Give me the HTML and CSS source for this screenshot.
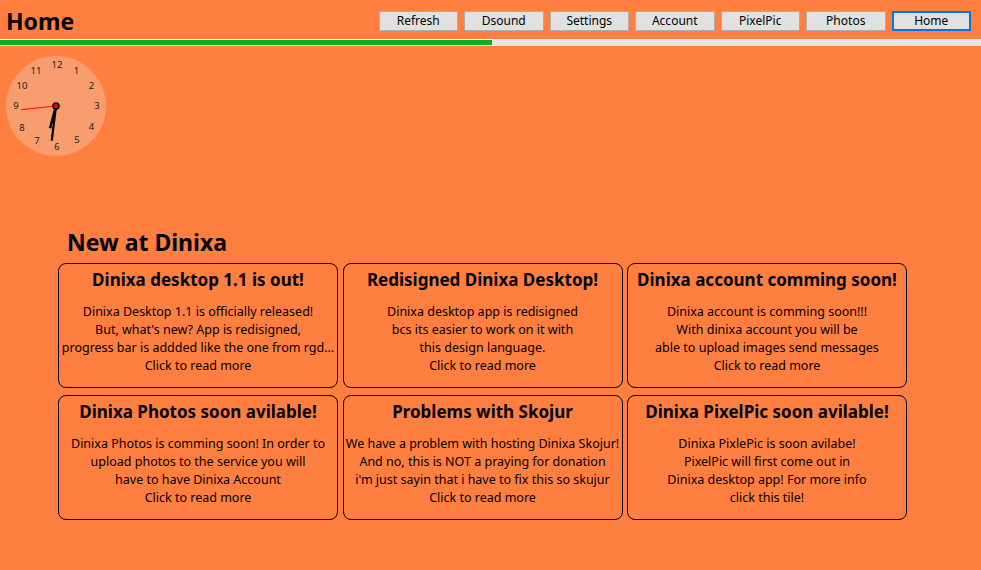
FILE: index.html
```html
<!DOCTYPE html>
<html>
<head>
<meta charset="utf-8">
<link rel="stylesheet" href="styles.css">
</head>
<body>
<header class="topbar">
  <h1 class="page-title">Home</h1>
  <nav class="nav">
    <button class="nav-btn">Refresh</button>
    <button class="nav-btn">Dsound</button>
    <button class="nav-btn">Settings</button>
    <button class="nav-btn">Account</button>
    <button class="nav-btn">PixelPic</button>
    <button class="nav-btn">Photos</button>
    <button class="nav-btn nav-btn-active">Home</button>
  </nav>
</header>
<div class="progress"><div class="progress-fill" style="width:50.2%"></div></div>

<div class="clock-wrap">
  <svg class="clock" width="102" height="102" viewBox="0 0 102 102">
    <circle cx="51" cy="51" r="50" class="face"/>
    <g class="nums">
      <text x="52" y="13">12</text>
      <text x="71.5" y="18.5">1</text>
      <text x="86.5" y="33.5">2</text>
      <text x="92" y="54">3</text>
      <text x="86.5" y="75">4</text>
      <text x="72" y="88">5</text>
      <text x="52" y="95">6</text>
      <text x="32" y="89">7</text>
      <text x="17" y="76">8</text>
      <text x="11" y="54">9</text>
      <text x="17" y="33.5">10</text>
      <text x="31" y="19">11</text>
    </g>
    <line x1="51" y1="51" x2="51" y2="28" class="hand-hour" transform="rotate(195 51 51)"/>
    <line x1="51" y1="51" x2="51" y2="16" class="hand-min" transform="rotate(187 51 51)"/>
    <line x1="51" y1="51" x2="51" y2="16" class="hand-sec" transform="rotate(264 51 51)"/>
    <circle cx="51" cy="51" r="3" class="hub"/>
  </svg>
</div>

<section class="news">
  <h2 class="news-title">New at Dinixa</h2>
  <div class="cards">
    <div class="card">
      <h3 class="card-title">Dinixa desktop 1.1 is out!</h3>
      <p class="card-text">Dinixa Desktop 1.1 is officially released!<br>But, what's new? App is redisigned,<br>progress bar is addded like the one from rgd...<br>Click to read more</p>
    </div>
    <div class="card">
      <h3 class="card-title">Redisigned Dinixa Desktop!</h3>
      <p class="card-text">Dinixa desktop app is redisigned<br>bcs its easier to work on it with<br>this design language.<br>Click to read more</p>
    </div>
    <div class="card">
      <h3 class="card-title">Dinixa account comming soon!</h3>
      <p class="card-text">Dinixa account is comming soon!!!<br>With dinixa account you will be<br>able to upload images send messages<br>Click to read more</p>
    </div>
    <div class="card">
      <h3 class="card-title">Dinixa Photos soon avilable!</h3>
      <p class="card-text">Dinixa Photos is comming soon! In order to<br>upload photos to the service you will<br>have to have Dinixa Account<br>Click to read more</p>
    </div>
    <div class="card">
      <h3 class="card-title">Problems with Skojur</h3>
      <p class="card-text">We have a problem with hosting Dinixa Skojur!<br>And no, this is NOT a praying for donation<br>i'm just sayin that i have to fix this so skujur<br>Click to read more</p>
    </div>
    <div class="card">
      <h3 class="card-title">Dinixa PixelPic soon avilable!</h3>
      <p class="card-text">Dinixa PixlePic is soon avilabe!<br>PixelPic will first come out in<br>Dinixa desktop app! For more info<br>click this tile!</p>
    </div>
  </div>
</section>
</body>
</html>
```

FILE: styles.css
```css
html, body {
  margin: 0;
  padding: 0;
}
body {
  background: #ff7f40;
  font-family: "Noto Sans", "Open Sans", sans-serif;
  color: #000;
  width: 981px;
  height: 570px;
  overflow: hidden;
}
.topbar {
  display: flex;
  justify-content: space-between;
  align-items: flex-start;
  height: 39px;
  padding: 0 10px 0 6px;
  box-sizing: border-box;
}
.page-title {
  margin: 0;
  font-size: 23px;
  line-height: 42px;
  font-weight: bold;
}
.nav {
  display: flex;
  gap: 6px;
  padding-top: 11px;
}
.nav-btn {
  width: 79.5px;
  height: 20px;
  box-sizing: border-box;
  background: #e1e1e1;
  border: 1px solid #adadad;
  font-family: inherit;
  font-size: 12px;
  line-height: 16px;
  padding: 0;
  color: #000;
}
.nav-btn-active {
  border: 2px solid #0078d7;
}
.progress {
  height: 7px;
  background: #e6e6e6;
  border-top: 1px solid #f0f0f0;
  box-sizing: border-box;
}
.progress-fill {
  height: 5px;
  background: #06b025;
}
.clock-wrap {
  padding: 9px 0 0 5px;
  height: 102px;
}
.clock .face {
  fill: #f89d6e;
}
.clock .nums text {
  font-size: 9.5px;
  fill: #222;
  text-anchor: middle;
}
.hand-hour {
  stroke: #000;
  stroke-width: 2.5;
}
.hand-min {
  stroke: #000;
  stroke-width: 2.2;
}
.hand-sec {
  stroke: #ff1a1a;
  stroke-width: 1.2;
}
.hub {
  fill: #e00;
  stroke: #000;
  stroke-width: 1.5;
}
.news {
  padding-left: 58px;
  margin-top: 70px;
}
.news-title {
  margin: 0 0 6px 9px;
  font-size: 23px;
  line-height: 30px;
  font-weight: bold;
}
.cards {
  display: grid;
  grid-template-columns: repeat(3, 280px);
  column-gap: 4.5px;
  row-gap: 7px;
}
.card {
  height: 125px;
  box-sizing: border-box;
  border: 1px solid #000;
  border-radius: 8px;
  text-align: center;
  overflow: hidden;
}
.card-title {
  margin: 4px 0 0;
  font-size: 17px;
  line-height: 24px;
  font-weight: bold;
  white-space: nowrap;
}
.card-text {
  margin: 11px 0 0;
  font-size: 12.5px;
  line-height: 18px;
  white-space: nowrap;
}
```
